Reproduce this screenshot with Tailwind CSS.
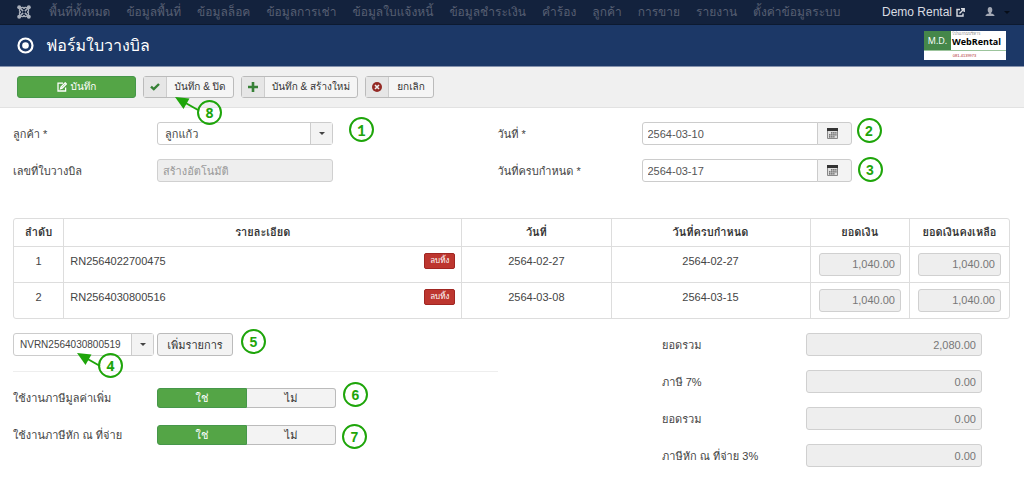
<!DOCTYPE html>
<html lang="th">
<head>
<meta charset="utf-8">
<meta name="viewport" content="width=device-width, initial-scale=1">
<title>ฟอร์มใบวางบิล</title>
<script src="https://cdn.jsdelivr.net/npm/@tailwindcss/browser@4"></script>
</head>
<body class="bg-white font-['Liberation_Sans','Loma',sans-serif] text-[11px] leading-4 text-[#444]">

<nav class="flex h-[25px] items-center border-b border-[#0d1a30] bg-[#13223d] pl-[17px] pr-[14px] text-xs text-[#575f72]">
  <a href="#" aria-label="Joomla" class="mr-[18px]">
    <svg class="size-[14px]" viewBox="0 0 14 14"><g fill="none" stroke="#a9afba" stroke-width="1.700"><path d="M2 2L12 12M12 2L2 12"/><path d="M3 3Q7 1.500 7 4Q7 1.500 11 3Q12.500 7 10 7Q12.500 7 11 11Q7 12.500 7 10Q7 12.500 3 11Q1.500 7 4 7Q1.500 7 3 3" stroke-width="1.300"/></g><path d="M7 5.300L8.700 7L7 8.700L5.300 7Z" fill="#13223d"/><g fill="#a9afba"><circle cx="2.200" cy="2.200" r="2"/><circle cx="11.800" cy="2.200" r="2"/><circle cx="2.200" cy="11.800" r="2"/><circle cx="11.800" cy="11.800" r="2"/></g></svg>
  </a>
  <div class="flex gap-4 whitespace-nowrap">
    <a href="#">พื้นที่ทั้งหมด</a>
    <a href="#">ข้อมูลพื้นที่</a>
    <a href="#">ข้อมูลล็อค</a>
    <a href="#">ข้อมูลการเช่า</a>
    <a href="#">ข้อมูลใบแจ้งหนี้</a>
    <a href="#">ข้อมูลชำระเงิน</a>
    <a href="#">คำร้อง</a>
    <a href="#">ลูกค้า</a>
    <a href="#">การขาย</a>
    <a href="#">รายงาน</a>
    <a href="#">ตั้งค่าข้อมูลระบบ</a>
  </div>
  <a href="#" class="ml-auto flex items-center gap-1 whitespace-nowrap text-[#d9dce2]">Demo Rental
    <svg class="size-[9px]" viewBox="0 0 9 9" fill="none" stroke="currentColor" stroke-width="1.400"><path d="M4 1.500H1V8H7V5.500M3.500 5.500L7.500 1.500M5 .8H8.200V4"/></svg>
  </a>
  <button type="button" aria-label="ผู้ใช้" class="ml-5 flex items-center gap-[9px]">
    <svg class="size-[10px]" viewBox="0 0 10 10" fill="#a4a9b5"><ellipse cx="5" cy="3" rx="2.300" ry="3"/><path d="M4 5H6V6.500Q9.500 7 9.500 9H.5Q.5 7 4 6.500Z"/></svg>
    <svg class="h-[3px] w-[6px]" viewBox="0 0 6 3" fill="#070d18"><path d="M0 0H6L3 3Z"/></svg>
  </button>
</nav>

<header class="flex h-[42px] items-center border-b border-[#8592ad] bg-[#1c3867] pl-[17px] pr-[18px]">
  <svg class="mr-3 size-[17px]" viewBox="0 0 17 17"><circle cx="8.500" cy="8.500" r="7" fill="none" stroke="#fff" stroke-width="2.200"/><circle cx="8.500" cy="8.500" r="3.300" fill="#fff"/></svg>
  <h1 class="text-base text-white">ฟอร์มใบวางบิล</h1>
  <a href="#" class="ml-auto flex h-[29px] w-[82px] flex-col bg-white text-black">
    <span class="flex h-5 border-b border-[#9cc49c]">
      <span class="flex w-[27px] items-center justify-center bg-[#45874a] font-['Open_Sans',sans-serif] text-[9px] text-white">M.D.</span>
      <span class="flex flex-col pl-px font-['Open_Sans','Loma',sans-serif]">
        <span class="h-1 text-[4px] leading-[6px] text-[#888]">โปรแกรมบริหาร</span>
        <span class="text-[9px] leading-[14px] font-bold">WebRental</span>
      </span>
    </span>
    <span class="pr-px text-center text-[4px] leading-[9px] text-[#b02a2a]">081-4139973</span>
  </a>
</header>

<div class="flex h-[41px] items-center gap-[7px] border-b border-[#e2e2e2] bg-[#f0f0f0] pl-[17px] text-[10px]">
  <button type="button" class="flex h-[22px] w-[119px] items-center justify-center gap-1 rounded-[3px] border border-[#46974a] bg-[#54a546] text-white">
    <svg class="size-[10px]" viewBox="0 0 10 10" fill="none" stroke="currentColor" stroke-width="1.300"><path d="M6 1.200H1V9H8.600V5.500M3.500 6.800L4 5L8.200 .8L9.400 2L5.200 6.200Z"/></svg>
    บันทึก
  </button>
  <div class="relative z-10">
    <button type="button" class="flex h-[22px] items-stretch rounded-[3px] border border-[#bbb] bg-[#f5f5f5] text-[#333]">
      <span class="flex w-[23px] items-center justify-center border-r border-[#ccc] bg-[#e6e6e6]"><svg class="h-2 w-[10px]" viewBox="0 0 10 8" fill="none" stroke="#378137" stroke-width="2.400"><path d="M1 3.600L3.800 6.200L9 1"/></svg></span>
      <span class="w-[66px] self-center text-center">บันทึก &amp; ปิด</span>
    </button>
    <svg class="pointer-events-none absolute left-[32px] top-[21px] h-4 w-6" viewBox="0 0 24 16"><path d="M0 0L14.500 1.500L8.500 12Z" fill="#1ea50a"/><path d="M8 4.500L23 13" stroke="#1ea50a" stroke-width="2"/></svg>
    <span class="absolute left-[54px] top-[24px] flex size-[25px] items-center justify-center rounded-full border-2 border-[#1ea50a] font-['Open_Sans',sans-serif] text-sm font-bold text-[#1ea50a]">8</span>
  </div>
  <button type="button" class="flex h-[22px] items-stretch rounded-[3px] border border-[#bbb] bg-[#f5f5f5] text-[#333]">
    <span class="flex w-[23px] items-center justify-center border-r border-[#ccc] bg-[#e6e6e6]"><svg class="size-[10px]" viewBox="0 0 10 10" fill="none" stroke="#378137" stroke-width="2.600"><path d="M5 0V10M0 5H10"/></svg></span>
    <span class="w-[92px] self-center text-center whitespace-nowrap">บันทึก &amp; สร้างใหม่</span>
  </button>
  <button type="button" class="flex h-[22px] items-stretch rounded-[3px] border border-[#bbb] bg-[#f5f5f5] text-[#333]">
    <span class="flex w-[23px] items-center justify-center border-r border-[#ccc] bg-[#e6e6e6]"><svg class="size-[10px]" viewBox="0 0 10 10"><circle cx="5" cy="5" r="5" fill="#942a25"/><path d="M3 3L7 7M7 3L3 7" stroke="#eee" stroke-width="1.600"/></svg></span>
    <span class="w-[44px] self-center text-center">ยกเลิก</span>
  </button>
</div>

<form class="pb-2">
  <div class="grid grid-cols-2 gap-y-[14px] pl-[13px] pr-[42px] pt-[14px]">
    <div class="flex items-center">
      <label for="customer" class="w-36">ลูกค้า *</label>
      <div class="relative">
        <select id="customer" class="block h-[23px] w-44 appearance-none rounded-[3px] border border-[#ccc] bg-white px-[7px]"><option>ลูกแก้ว</option></select>
        <span class="pointer-events-none absolute inset-y-px right-px flex w-[22px] items-center justify-center border-l border-[#ccc] bg-[#f3f3f3]"><svg class="h-[3px] w-[6px]" viewBox="0 0 6 3" fill="#444"><path d="M0 0H6L3 3Z"/></svg></span>
        <span class="absolute left-[192px] -top-[5px] flex size-[25px] items-center justify-center rounded-full border-2 border-[#1ea50a] font-['Lato',sans-serif] text-base font-bold text-[#1ea50a]">1</span>
      </div>
    </div>
    <div class="flex items-center">
      <label for="date" class="w-36">วันที่ *</label>
      <div class="relative flex">
        <input id="date" type="text" value="2564-03-10" class="h-[23px] w-44 rounded-l-[3px] border border-[#ccc] px-[5px] text-[#555]">
        <button type="button" aria-label="เลือกวันที่" class="-ml-px flex h-[23px] w-[35px] items-center justify-center rounded-r-[3px] border border-[#ccc] bg-[#f3f3f3] pr-1">
          <svg class="size-[11px]" viewBox="0 0 11 11"><path d="M.5 1H10.500V10.500H.5Z" fill="#ddd" stroke="#888"/><path d="M0 0H11V3H0Z" fill="#333"/><path d="M4 4.800H9.500M2 6.800H9.500M2 8.800H7.500" stroke="#555" stroke-width="1.300" stroke-dasharray="1.500 .6"/></svg>
        </button>
        <span class="absolute left-[215px] -top-[4px] flex size-[25px] items-center justify-center rounded-full border-2 border-[#1ea50a] text-sm font-bold text-[#1ea50a]">2</span>
      </div>
    </div>
    <div class="flex items-center">
      <label for="billno" class="w-36">เลขที่ใบวางบิล</label>
      <input id="billno" type="text" disabled placeholder="สร้างอัตโนมัติ" class="h-[23px] w-44 rounded-[3px] border border-[#d0d0d0] bg-[#eee] px-[5px] placeholder:text-[#999]">
    </div>
    <div class="flex items-center">
      <label for="due" class="w-36">วันที่ครบกำหนด *</label>
      <div class="relative flex">
        <input id="due" type="text" value="2564-03-17" class="h-[23px] w-44 rounded-l-[3px] border border-[#ccc] px-[5px] text-[#555]">
        <button type="button" aria-label="เลือกวันที่ครบกำหนด" class="-ml-px flex h-[23px] w-[35px] items-center justify-center rounded-r-[3px] border border-[#ccc] bg-[#f3f3f3] pr-1">
          <svg class="size-[11px]" viewBox="0 0 11 11"><path d="M.5 1H10.500V10.500H.5Z" fill="#ddd" stroke="#888"/><path d="M0 0H11V3H0Z" fill="#333"/><path d="M4 4.800H9.500M2 6.800H9.500M2 8.800H7.500" stroke="#555" stroke-width="1.300" stroke-dasharray="1.500 .6"/></svg>
        </button>
        <span class="absolute left-[216px] -top-[2px] flex size-[25px] items-center justify-center rounded-full border-2 border-[#1ea50a] text-sm font-bold text-[#1ea50a]">3</span>
      </div>
    </div>
  </div>

  <div class="mt-9 pl-[13px] pr-[14px]">
    <div class="rounded-[3px] border border-[#ddd]">
    <table class="w-full table-fixed border-collapse text-center">
      <colgroup><col class="w-[5%]"><col class="w-[40%]"><col class="w-[15%]"><col class="w-[20%]"><col class="w-[10%]"><col class="w-[10%]"></colgroup>
      <thead>
        <tr class="h-[27px] divide-x divide-[#ddd] text-[#333]">
          <th>ลำดับ</th><th>รายละเอียด</th><th>วันที่</th><th>วันที่ครบกำหนด</th><th>ยอดเงิน</th><th>ยอดเงินคงเหลือ</th>
        </tr>
      </thead>
      <tbody class="align-top">
        <tr class="h-9 divide-x divide-[#ddd] border-t border-[#ddd]">
          <td class="pt-[6px]">1</td>
          <td class="px-[6px] pt-[6px]"><div class="flex justify-between"><span>RN2564022700475</span><button type="button" class="h-4 w-[31px] rounded-[2px] border border-[#a02622] bg-[#bd362f] text-[8px] leading-[14px] text-white">ลบทิ้ง</button></div></td>
          <td class="pt-[6px]">2564-02-27</td>
          <td class="pt-[6px]">2564-02-27</td>
          <td class="px-2 pt-[6px]"><input type="text" aria-label="ยอดเงิน 1" readonly value="1,040.00" class="block h-[23px] w-full rounded-[3px] border border-[#d0d0d0] bg-[#eee] px-[5px] text-right text-[#777]"></td>
          <td class="px-2 pt-[6px]"><input type="text" aria-label="ยอดเงินคงเหลือ 1" readonly value="1,040.00" class="block h-[23px] w-full rounded-[3px] border border-[#d0d0d0] bg-[#eee] px-[5px] text-right text-[#777]"></td>
        </tr>
        <tr class="h-9 divide-x divide-[#ddd] border-t border-[#ddd]">
          <td class="pt-[6px]">2</td>
          <td class="px-[6px] pt-[6px]"><div class="flex justify-between"><span>RN2564030800516</span><button type="button" class="h-4 w-[31px] rounded-[2px] border border-[#a02622] bg-[#bd362f] text-[8px] leading-[14px] text-white">ลบทิ้ง</button></div></td>
          <td class="pt-[6px]">2564-03-08</td>
          <td class="pt-[6px]">2564-03-15</td>
          <td class="px-2 pt-[6px]"><input type="text" aria-label="ยอดเงิน 2" readonly value="1,040.00" class="block h-[23px] w-full rounded-[3px] border border-[#d0d0d0] bg-[#eee] px-[5px] text-right text-[#777]"></td>
          <td class="px-2 pt-[6px]"><input type="text" aria-label="ยอดเงินคงเหลือ 2" readonly value="1,040.00" class="block h-[23px] w-full rounded-[3px] border border-[#d0d0d0] bg-[#eee] px-[5px] text-right text-[#777]"></td>
        </tr>
      </tbody>
    </table>
    </div>
  </div>

  <div class="grid grid-cols-2 pl-[13px] pr-[42px] pt-[14px]">
    <div>
      <div class="flex gap-[3px]">
        <div class="relative z-10">
          <select aria-label="รายการ" class="block h-[23px] w-[141px] appearance-none rounded-[3px] border border-[#ccc] bg-white px-[6px] text-[10px]"><option>NVRN2564030800519</option></select>
          <span class="pointer-events-none absolute inset-y-px right-px flex w-[22px] items-center justify-center border-l border-[#ccc] bg-[#f3f3f3]"><svg class="h-[3px] w-[6px]" viewBox="0 0 6 3" fill="#444"><path d="M0 0H6L3 3Z"/></svg></span>
          <svg class="pointer-events-none absolute left-[64px] top-[20px] h-4 w-6" viewBox="0 0 24 16"><path d="M0 0L14.500 1.500L8.500 12Z" fill="#1ea50a"/><path d="M8 4.500L23 13" stroke="#1ea50a" stroke-width="2"/></svg>
          <span class="absolute left-[85px] top-[20px] flex size-[25px] items-center justify-center rounded-full border-2 border-[#1ea50a] font-['Open_Sans',sans-serif] text-sm font-bold text-[#1ea50a]">4</span>
        </div>
        <div class="relative">
          <button type="button" class="h-[23px] w-[76px] rounded-[3px] border border-[#bbb] bg-[#f3f3f3] text-[#333]">เพิ่มรายการ</button>
          <span class="absolute left-[84px] -top-[4px] flex size-[25px] items-center justify-center rounded-full border-2 border-[#1ea50a] text-sm font-bold text-[#1ea50a]">5</span>
        </div>
      </div>
      <hr class="mb-4 mt-[15px] border-[#eee]">
      <fieldset class="mb-[17px] flex items-center">
        <legend class="float-left w-36">ใช้งานภาษีมูลค่าเพิ่ม</legend>
        <div class="relative flex h-5 text-center leading-[18px]">
          <label class="w-[90px] rounded-l-[3px] border border-[#46974a] bg-[#54a546] text-white"><input type="radio" name="vat" checked class="sr-only">ใช่</label>
          <label class="w-[89px] rounded-r-[3px] border border-l-0 border-[#bbb] bg-[#f3f3f3] text-[#333]"><input type="radio" name="vat" class="sr-only">ไม่</label>
          <span class="absolute left-[186px] -top-[6px] flex size-[25px] items-center justify-center rounded-full border-2 border-[#1ea50a] text-sm font-bold text-[#1ea50a]">6</span>
        </div>
      </fieldset>
      <fieldset class="flex items-center">
        <legend class="float-left w-36">ใช้งานภาษีหัก ณ ที่จ่าย</legend>
        <div class="relative flex h-5 text-center leading-[18px]">
          <label class="w-[90px] rounded-l-[3px] border border-[#46974a] bg-[#54a546] text-white"><input type="radio" name="wht" checked class="sr-only">ใช่</label>
          <label class="w-[89px] rounded-r-[3px] border border-l-0 border-[#bbb] bg-[#f3f3f3] text-[#333]"><input type="radio" name="wht" class="sr-only">ไม่</label>
          <span class="absolute left-[185px] -top-[1px] flex size-[25px] items-center justify-center rounded-full border-2 border-[#1ea50a] text-sm font-bold text-[#1ea50a]">7</span>
        </div>
      </fieldset>
    </div>
    <div class="ml-auto flex w-80 flex-col gap-[14px]">
      <div class="flex items-center"><label for="sum" class="w-36">ยอดรวม</label><input id="sum" type="text" readonly value="2,080.00" class="h-[23px] w-44 rounded-[3px] border border-[#d0d0d0] bg-[#eee] px-[5px] text-right text-[#777]"></div>
      <div class="flex items-center"><label for="tax" class="w-36">ภาษี 7%</label><input id="tax" type="text" readonly value="0.00" class="h-[23px] w-44 rounded-[3px] border border-[#d0d0d0] bg-[#eee] px-[5px] text-right text-[#777]"></div>
      <div class="flex items-center"><label for="total" class="w-36">ยอดรวม</label><input id="total" type="text" readonly value="0.00" class="h-[23px] w-44 rounded-[3px] border border-[#d0d0d0] bg-[#eee] px-[5px] text-right text-[#777]"></div>
      <div class="flex items-center"><label for="wh" class="w-36">ภาษีหัก ณ ที่จ่าย 3%</label><input id="wh" type="text" readonly value="0.00" class="h-[23px] w-44 rounded-[3px] border border-[#d0d0d0] bg-[#eee] px-[5px] text-right text-[#777]"></div>
    </div>
  </div>
</form>
</body>
</html>
